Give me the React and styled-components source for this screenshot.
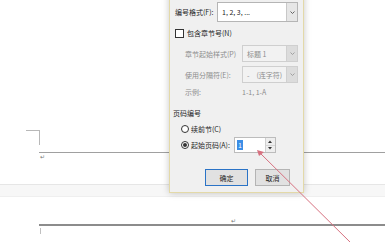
import React from "react";
import styled, { createGlobalStyle } from "styled-components";

const Global = createGlobalStyle`
  html, body { margin: 0; padding: 0; background: #fff; }
  body { font-family: "Noto Sans CJK SC", "Noto Sans", sans-serif; }
`;

const Page = styled.div`
  position: relative;
  width: 385px;
  height: 242px;
  overflow: hidden;
  background: #fff;
`;

const Doc = styled.div`
  display: flex;
  flex-direction: column;
`;

const Spacer = styled.div`
  height: ${(p) => p.$h}px;
  flex: none;
`;

const CornerMark = styled.div`
  margin-left: 26px;
  width: 14px;
  height: 15px;
  border-top: 1px solid #b8b8b8;
  border-right: 1px solid #b8b8b8;
  box-sizing: border-box;
`;

const HeaderLine = styled.div`
  margin-left: 39px;
  margin-top: 7px;
  height: 1px;
  background: #a0a0a0;
`;

const ReturnMark = styled.div`
  margin-left: ${(p) => p.$x}px;
  height: ${(p) => p.$h || 8}px;
  font-size: 6px;
  line-height: ${(p) => p.$h || 8}px;
  color: #777;
  font-family: "DejaVu Sans", sans-serif;
`;

const PageGap = styled.div`
  height: 11px;
  background: #f7f7f7;
  border-top: 1px solid #e6e6e6;
  border-bottom: 1px solid #efefef;
`;

const BodyLine = styled.div`
  margin-left: 39px;
  height: 2px;
  background: #8c8c8c;
`;

const Tick = styled.div`
  margin-left: 40px;
  margin-top: 2px;
  width: 1px;
  height: 6px;
  background: #c0c0c0;
`;

const Dialog = styled.div`
  position: absolute;
  left: 169px;
  top: -7px;
  width: 135px;
  height: 200px;
  box-sizing: border-box;
  background: #f0f0f0;
  border: 1px solid #e3d9a8;
  box-shadow: 0 0 7px rgba(0, 0, 0, 0.22);
  padding: 8px 5px 0 5px;
  display: flex;
  flex-direction: column;
  font-size: 7px;
  color: #1e1e1e;
`;

const Row = styled.div`
  display: flex;
  align-items: center;
  height: ${(p) => p.$h}px;
  margin-top: ${(p) => p.$mt || 0}px;
  padding-left: ${(p) => p.$indent || 0}px;
  flex: none;
`;

const Label = styled.span`
  white-space: nowrap;
  color: ${(p) => (p.$disabled ? "#8d8d8d" : "#1e1e1e")};
  width: ${(p) => (p.$w ? p.$w + "px" : "auto")};
  flex: none;
  margin-left: ${(p) => p.$ml || 0}px;
`;

const Select = styled.div`
  margin-left: auto;
  width: ${(p) => p.$w}px;
  height: 100%;
  box-sizing: border-box;
  display: flex;
  align-items: center;
  border: 1px solid ${(p) => (p.$disabled ? "#cfcfcf" : "#b5b5b5")};
  background: ${(p) => (p.$disabled ? "#f2f2f2" : "#ffffff")};
  color: ${(p) => (p.$disabled ? "#8d8d8d" : "#1e1e1e")};
`;

const SelectText = styled.span`
  flex: 1;
  padding-left: 4px;
  white-space: nowrap;
  overflow: hidden;
`;

const SelectArrow = styled.div`
  width: 10px;
  height: 100%;
  background: ${(p) => (p.$disabled ? "#dcdcdc" : "#e6e6e6")};
  border-left: 1px solid ${(p) => (p.$disabled ? "#d0d0d0" : "#c8c8c8")};
  display: flex;
  align-items: center;
  justify-content: center;
`;

const Check = styled.div`
  width: 9px;
  height: 9px;
  box-sizing: border-box;
  border: 1px solid #333;
  background: #fff;
  margin-right: 3px;
  flex: none;
`;

const Radio = styled.div`
  width: 8px;
  height: 8px;
  box-sizing: border-box;
  border-radius: 50%;
  border: 1px solid #333;
  background: #fff;
  margin-right: 2px;
  flex: none;
  display: flex;
  align-items: center;
  justify-content: center;
  &::after {
    content: "";
    width: 4px;
    height: 4px;
    border-radius: 50%;
    background: ${(p) => (p.$checked ? "#333" : "transparent")};
  }
`;

const Spin = styled.div`
  margin-left: 4px;
  width: 42px;
  height: 16px;
  box-sizing: border-box;
  border: 1px solid #bcbcbc;
  background: #fff;
  display: flex;
`;

const SpinText = styled.div`
  flex: 1;
  display: flex;
  align-items: center;
  padding-left: 2px;
`;

const Selected = styled.span`
  background: #3c8ee6;
  color: #fff;
  line-height: 10px;
  padding: 0 1px;
`;

const SpinButtons = styled.div`
  width: 9px;
  display: flex;
  flex-direction: column;
  border-left: 1px solid #d0d0d0;
`;

const SpinBtn = styled.div`
  flex: 1;
  display: flex;
  align-items: center;
  justify-content: center;
  background: #eeeeee;
  & + & { border-top: 1px solid #d6d6d6; }
`;

const Buttons = styled.div`
  display: flex;
  margin-top: ${(p) => p.$mt}px;
  padding-left: 30px;
  gap: 7px;
  height: 17px;
  flex: none;
`;

const Button = styled.div`
  width: ${(p) => p.$w}px;
  height: 100%;
  box-sizing: border-box;
  display: flex;
  align-items: center;
  justify-content: center;
  background: #e1e1e1;
  border: 1px solid ${(p) => (p.$primary ? "#2a73c6" : "#b4b4b4")};
  color: #1e1e1e;
`;

const ArrowSvg = styled.svg`
  position: absolute;
  left: 0;
  top: 0;
  pointer-events: none;
`;

const DownTri = ({ color = "#555" }) => (
  <svg width="5" height="3" viewBox="0 0 5 3">
    <path d="M0.5 0.5 L2.5 2.5 L4.5 0.5" fill="none" stroke={color} strokeWidth="0.9" />
  </svg>
);

const Tri = ({ up }) => (
  <svg width="4" height="3" viewBox="0 0 4 3">
    <path d={up ? "M0 3 L2 0.5 L4 3 Z" : "M0 0 L2 2.5 L4 0 Z"} fill="#333" />
  </svg>
);

export default function App() {
  return (
    <>
      <Global />
      <Page>
        <Doc>
          <Spacer $h={130} />
          <CornerMark />
          <HeaderLine />
          <ReturnMark $x={40} $h={8}>↵</ReturnMark>
          <Spacer $h={23} />
          <PageGap />
          <Spacer $h={20} />
          <ReturnMark $x={231} $h={7}>↵</ReturnMark>
          <BodyLine />
          <Tick />
        </Doc>

        <Dialog>
          <Row $h={20}>
            <Label>编号格式(F):</Label>
            <Select $w={81}>
              <SelectText>1, 2, 3, ...</SelectText>
              <SelectArrow><DownTri /></SelectArrow>
            </Select>
          </Row>
          <Row $h={12} $mt={5}>
            <Check />
            <Label>包含章节号(N)</Label>
          </Row>
          <Row $h={17} $mt={6} $indent={10}>
            <Label $disabled>章节起始样式(P)</Label>
            <Select $w={56} $disabled>
              <SelectText>标题 1</SelectText>
              <SelectArrow $disabled><DownTri color="#999" /></SelectArrow>
            </Select>
          </Row>
          <Row $h={17} $mt={4} $indent={10}>
            <Label $disabled>使用分隔符(E):</Label>
            <Select $w={56} $disabled>
              <SelectText>-　(连字符)</SelectText>
              <SelectArrow $disabled><DownTri color="#999" /></SelectArrow>
            </Select>
          </Row>
          <Row $h={10} $mt={4} $indent={10}>
            <Label $disabled $w={57}>示例:</Label>
            <Label $disabled>1-1, 1-A</Label>
          </Row>
          <Row $h={10} $mt={11} $indent={0}>
            <Label $ml={-2}>页码编号</Label>
          </Row>
          <Row $h={10} $mt={6} $indent={6}>
            <Radio />
            <Label>续前节(C)</Label>
          </Row>
          <Row $h={16} $mt={3} $indent={6}>
            <Radio $checked />
            <Label>起始页码(A):</Label>
            <Spin>
              <SpinText><Selected>1</Selected></SpinText>
              <SpinButtons>
                <SpinBtn><Tri up /></SpinBtn>
                <SpinBtn><Tri /></SpinBtn>
              </SpinButtons>
            </Spin>
          </Row>
          <Buttons $mt={16}>
            <Button $w={43} $primary>确定</Button>
            <Button $w={35}>取消</Button>
          </Buttons>
        </Dialog>

        <ArrowSvg width="385" height="242" viewBox="0 0 385 242">
          <line x1="352" y1="244" x2="260" y2="153" stroke="#d6707f" strokeWidth="1" />
          <path d="M257 150 L264 152 L259 156 Z" fill="#d6707f" />
        </ArrowSvg>
      </Page>
    </>
  );
}
